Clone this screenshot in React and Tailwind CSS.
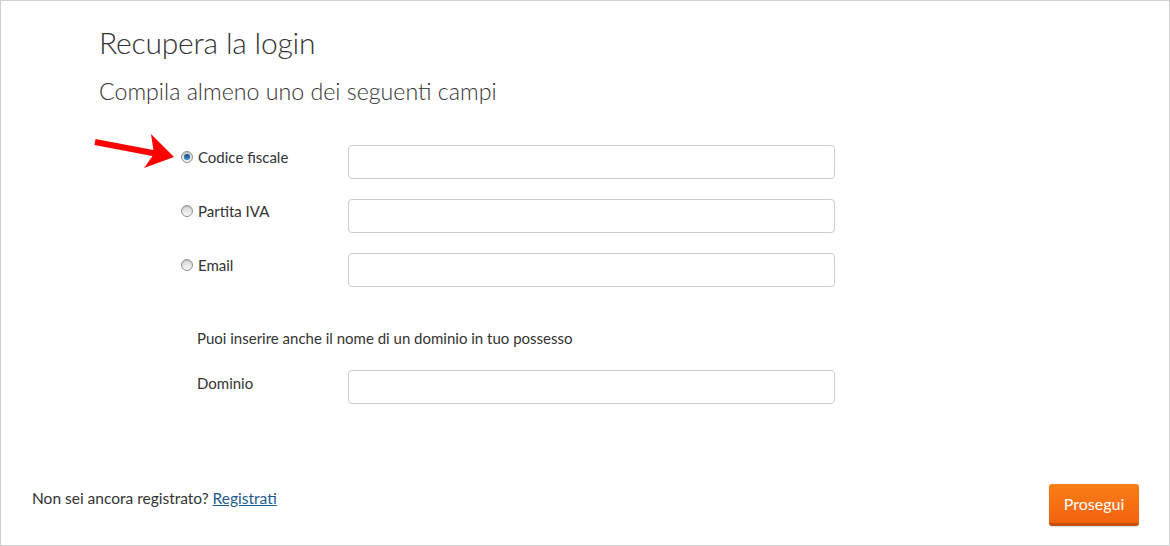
import { useState } from 'react';

const fields = [
  { id: 'cf', label: 'Codice fiscale' },
  { id: 'piva', label: 'Partita IVA' },
  { id: 'email', label: 'Email' },
];

const Radio = ({ checked }) => (
  <span className="relative inline-flex w-[12px] h-[12px] shrink-0 items-center justify-center rounded-full border border-[#8e8f8f] bg-gradient-to-b from-[#d8d8d8] to-[#f7f7f7] shadow-[inset_0_1px_1px_rgba(0,0,0,0.15)]">
    {checked && (
      <span className="w-[6px] h-[6px] rounded-full bg-gradient-to-b from-[#0b4c85] to-[#3d93d0] shadow-[0_0_1px_#6fb0e2]" />
    )}
  </span>
);

const Arrow = () => (
  <svg className="absolute left-[90px] top-[128px]" width="90" height="45" viewBox="90 128 90 45">
    <line x1="94" y1="141" x2="157" y2="153" stroke="#ff0000" strokeWidth="6" />
    <polygon points="150,133 173,156 143,167 153,153" fill="#ff0000" />
  </svg>
);

export default function App() {
  const [picked, setPicked] = useState('cf');

  return (
    <div className="relative w-[1170px] h-[546px] border border-[#d0d0d0] bg-white flex flex-col text-[#333] font-['Lato',sans-serif]">
      <Arrow />
      <div className="pl-[98px] pt-[23px]">
        <h1 className="text-[30px] font-light leading-[36px] tracking-[-0.2px]">Recupera la login</h1>
        <h2 className="mt-[17px] text-[23.2px] font-light leading-[28px]">Compila almeno uno dei seguenti campi</h2>
      </div>

      <div className="ml-[180px] mt-[40px] flex flex-col gap-[20px]">
        {fields.map((f) => (
          <div key={f.id} className="flex items-start">
            <label
              className="w-[167px] flex items-center gap-[5px] pt-[3px] text-[15px] leading-[18px] cursor-pointer"
              onClick={() => setPicked(f.id)}
            >
              <Radio checked={picked === f.id} />
              {f.label}
            </label>
            <input className="w-[487px] h-[34px] rounded-[4px] border border-[#cccccc] px-2 outline-none" />
          </div>
        ))}
      </div>

      <p className="ml-[196px] mt-[42px] text-[15px] leading-[18px]">Puoi inserire anche il nome di un dominio in tuo possesso</p>

      <div className="ml-[196px] mt-[23px] flex items-start">
        <label className="w-[151px] pt-[4px] text-[15px] leading-[18px]">Dominio</label>
        <input className="w-[487px] h-[34px] rounded-[4px] border border-[#cccccc] px-2 outline-none" />
      </div>

      <div className="mt-auto flex items-start justify-between pl-[31px] pr-[30px] pb-[19px]">
        <p className="pt-[5px] text-[15.5px] leading-[18px]">
          Non sei ancora registrato?{' '}
          <a href="#" className="text-[#1c5b8d] underline">Registrati</a>
        </p>
        <button className="w-[90px] h-[42px] rounded-[3px] bg-gradient-to-b from-[#fb7e16] to-[#f2620e] border-b-[3px] border-[#c5500b] text-white text-[16px] leading-none shadow-[0_1px_2px_rgba(0,0,0,0.15)]">
          Prosegui
        </button>
      </div>
    </div>
  );
}
